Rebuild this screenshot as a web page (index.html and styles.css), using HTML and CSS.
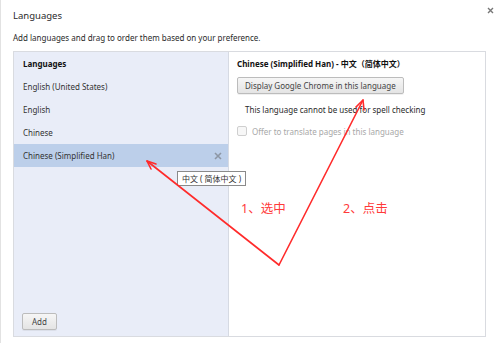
FILE: index.html
```html
<!DOCTYPE html>
<html lang="en">
<head>
<meta charset="UTF-8" />
<meta name="viewport" content="width=device-width, initial-scale=1" />
<title>Languages</title>
<link rel="stylesheet" href="styles.css">
</head>
<body>
  <div class="dialog">
    <header class="dialog-head">
      <h1>Languages</h1>
      <button class="close-btn" aria-label="Close">
        <svg width="7" height="7" viewBox="0 0 7 7"><path d="M1 1 L6 6 M6 1 L1 6" stroke="#777" stroke-width="1.4" /></svg>
      </button>
    </header>
    <p class="intro">Add languages and drag to order them based on your preference.</p>

    <div class="panel">
      <section class="lang-list">
        <div class="lang-row lang-head">Languages</div>
        <div class="lang-row">English (United States)</div>
        <div class="lang-row">English</div>
        <div class="lang-row">Chinese</div>
        <div class="lang-row selected">Chinese (Simplified Han)
          <svg class="row-remove" width="8" height="8" viewBox="0 0 8 8"><path d="M1 1 L7 7 M7 1 L1 7" stroke="#8d97a5" stroke-width="1.6" /></svg>
        </div>
        <div class="list-foot">
          <button class="btn">Add</button>
        </div>
      </section>

      <section class="lang-detail">
        <div class="detail-title">Chinese (Simplified Han) - 中文（简体中文）</div>
        <button class="btn btn-wide">Display Google Chrome in this language</button>
        <p class="note">This language cannot be used for spell checking</p>
        <label class="check disabled"><span class="box"></span>Offer to translate pages in this language</label>
      </section>
    </div>
  </div>

  <div class="tooltip">中文 ( 简体中文 )</div>

  <!-- annotations drawn over the screenshot -->
  <svg class="marks" width="497" height="343" viewBox="0 0 497 343">
    <g stroke="#ff2b2b" stroke-width="1.6" fill="none" stroke-linecap="round">
      <path d="M278 265 L146 161" />
      <path d="M146 161 L155 164 M146 161 L150 169" />
      <path d="M278 265 L362 100" />
      <path d="M362 100 L355 107 M362 100 L363 110" />
    </g>
  </svg>
  <div class="step step-1">1、选中</div>
  <div class="step step-2">2、点击</div>
</body>
</html>
```

FILE: styles.css
```css
* {
  box-sizing: border-box;
}
body {
  margin: 0;
  width: 497px;
  height: 343px;
  overflow: hidden;
  position: relative;
  background: #fff;
  color: #2a2a2a;
  font-family: 'Noto Sans', 'Noto Sans CJK SC', sans-serif;
  font-size: 8px;
  border-left: 1px solid #e2e2e2;
}
.dialog {
  padding: 0 11px 0 12px;
}
.dialog-head {
  display: flex;
  justify-content: space-between;
  align-items: flex-start;
  height: 30px;
}
.dialog-head h1 {
  margin: 0;
  padding-top: 8px;
  font-size: 9.5px;
  font-weight: 400;
  color: #2a2a2a;
  line-height: 16px;
}
.close-btn {
  display: block;
  background: none;
  border: none;
  padding: 0;
  margin: 7px -8px 0 0;
  line-height: 0;
  cursor: pointer;
}
.intro {
  margin: 0;
  height: 21px;
  line-height: 16px;
}

/* Main panel */
.panel {
  display: grid;
  grid-template-columns: 215px 1fr;
  height: 286px;
  border: 1px solid #d9dbe0;
}
.lang-list {
  display: flex;
  flex-direction: column;
  background: #e9edf8;
  border-right: 1px solid #d6dae3;
}
.lang-row {
  position: relative;
  height: 23px;
  line-height: 23px;
  padding-left: 9px;
  color: #333;
}
.lang-head {
  font-weight: 700;
  color: #111;
}
.lang-row.selected {
  background: #bccfea;
}
.row-remove {
  position: absolute;
  right: 6px;
  top: 8px;
}
.list-foot {
  margin-top: auto;
  padding: 0 0 6px 8px;
}
.btn {
  font: inherit;
  color: #444;
  height: 17px;
  padding: 0 9px;
  border: 1px solid #bcbcbc;
  border-radius: 2px;
  background: linear-gradient(#f6f6f6, #e4e4e4);
  box-shadow: 0 1px 0 rgba(0,0,0,0.06);
}
.lang-detail {
  padding: 0 8px;
}
.detail-title {
  height: 23px;
  line-height: 23px;
  font-weight: 700;
  color: #111;
}
.btn-wide {
  display: block;
  margin-top: 2px;
  height: 17px;
  padding: 0 7px;
}
.note {
  margin: 0;
  padding: 8px 0 0 8px;
  line-height: 16px;
}
.check {
  display: flex;
  align-items: center;
  gap: 5px;
  margin-top: 7px;
  height: 12px;
}
.check .box {
  width: 10px;
  height: 10px;
  border: 1px solid #cfcfcf;
  border-radius: 2px;
  background: #f7f7f7;
}
.check.disabled {
  color: #a8a8a8;
}

/* Tooltip over the list */
.tooltip {
  position: absolute;
  left: 176px;
  top: 171px;
  height: 15px;
  padding: 0 4px;
  line-height: 13px;
  font-size: 8px;
  color: #333;
  background: #fff;
  border: 1px solid #8a8a8a;
  white-space: nowrap;
}

/* Red annotations */
.marks {
  position: absolute;
  left: 0;
  top: 0;
}
.step {
  position: absolute;
  top: 200px;
  color: #ff3a3a;
  font-size: 12.5px;
  line-height: 18px;
  white-space: nowrap;
}
.step-1 {
  left: 240px;
}
.step-2 {
  left: 342px;
}
```
